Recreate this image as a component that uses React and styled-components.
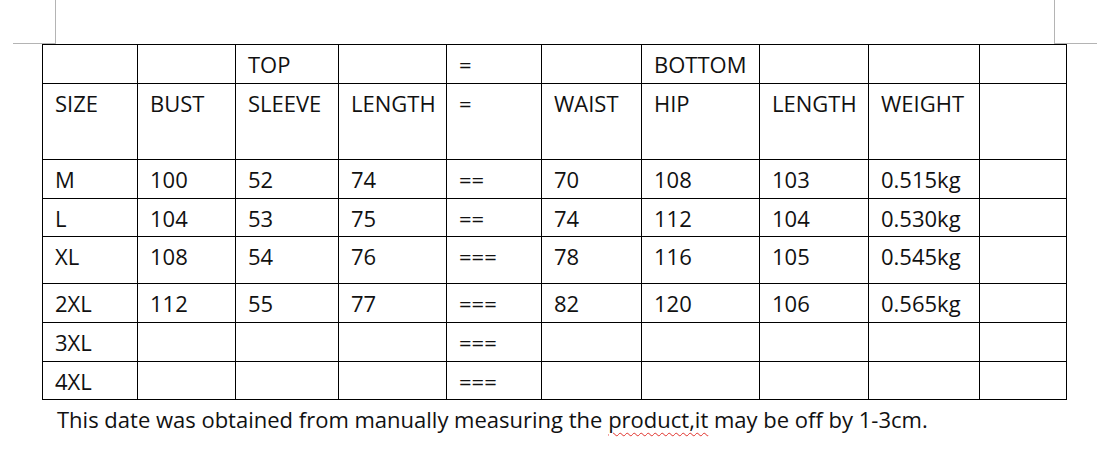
import React from "react";
import styled, { createGlobalStyle } from "styled-components";

const GlobalStyle = createGlobalStyle`
  html, body { margin: 0; padding: 0; background: #ffffff; }
  body { font-family: "Open Sans", Lato, "Liberation Sans", sans-serif; color: #111; }
`;

const Page = styled.div`
  width: 1110px;
  height: 460px;
  background: #ffffff;
  overflow: hidden;
`;

const MarginMarks = styled.div`
  display: flex;
  justify-content: space-between;
  padding: 0 13px 0 13px;
  height: 44px;
`;

const Corner = styled.div`
  box-sizing: border-box;
  width: 43px;
  height: 44px;
  border-bottom: 1px solid #b4b4b4;
  ${(p) => (p.$side === "left" ? "border-right: 1px solid #b4b4b4;" : "border-left: 1px solid #b4b4b4;")}
`;

const Table = styled.table`
  margin-left: 42px;
  border-collapse: collapse;
  table-layout: fixed;
  width: 1025px;
  font-size: 22px;
  line-height: 26px;
  color: #111;
`;

const Col = styled.col``;

const Row = styled.tr`
  height: ${(p) => p.$h}px;
`;

const Cell = styled.td`
  border: 1px solid #000;
  padding: 6px 2px 0 12px;
  vertical-align: top;
  white-space: nowrap;
  overflow: hidden;
  box-sizing: border-box;
`;

const Note = styled.p`
  margin: 6px 0 0 57px;
  font-size: 22px;
  line-height: 26px;
  color: #111;
`;

const Misspelled = styled.span`
  text-decoration-line: underline;
  text-decoration-style: wavy;
  text-decoration-color: #e0312b;
  text-decoration-thickness: 1px;
  text-underline-offset: 4px;
`;

const widths = [95, 98, 103, 108, 95, 100, 118, 109, 111, 87];

const rows = [
  { h: 39, cells: ["", "", "TOP", "", "=", "", "BOTTOM", "", "", ""] },
  { h: 76, cells: ["SIZE", "BUST", "SLEEVE", "LENGTH", "=", "WAIST", "HIP", "LENGTH", "WEIGHT", ""] },
  { h: 39, cells: ["M", "100", "52", "74", "==", "70", "108", "103", "0.515kg", ""] },
  { h: 38, cells: ["L", "104", "53", "75", "==", "74", "112", "104", "0.530kg", ""] },
  { h: 47, cells: ["XL", "108", "54", "76", "===", "78", "116", "105", "0.545kg", ""] },
  { h: 39, cells: ["2XL", "112", "55", "77", "===", "82", "120", "106", "0.565kg", ""] },
  { h: 39, cells: ["3XL", "", "", "", "===", "", "", "", "", ""] },
  { h: 38, cells: ["4XL", "", "", "", "===", "", "", "", "", ""] },
];

export default function App() {
  return (
    <Page>
      <GlobalStyle />
      <MarginMarks>
        <Corner $side="left" />
        <Corner $side="right" />
      </MarginMarks>
      <Table>
        <colgroup>
          {widths.map((w, i) => (
            <Col key={i} style={{ width: w }} />
          ))}
        </colgroup>
        <tbody>
          {rows.map((r, i) => (
            <Row key={i} $h={r.h}>
              {r.cells.map((c, j) => (
                <Cell key={j}>{c}</Cell>
              ))}
            </Row>
          ))}
        </tbody>
      </Table>
      <Note>
        This date was obtained from manually measuring the <Misspelled>product,it</Misspelled> may be off by 1-3cm.
      </Note>
    </Page>
  );
}
